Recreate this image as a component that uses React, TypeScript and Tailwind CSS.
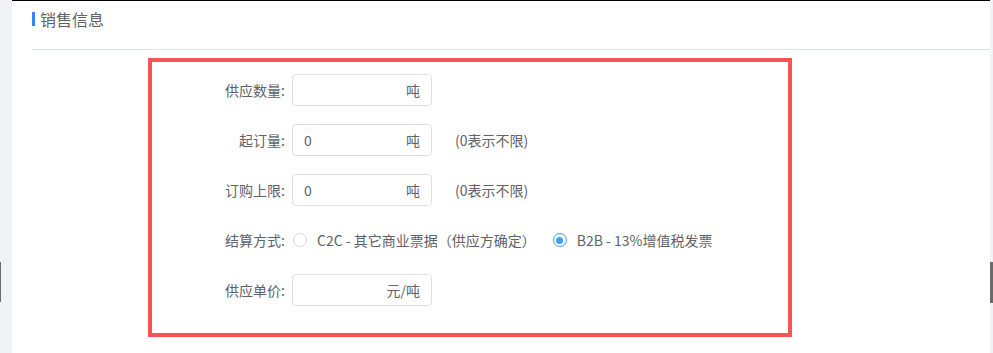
import React from 'react'

const FONT = { fontFamily: '"Noto Sans CJK SC", "Noto Sans", sans-serif' }

const InputWithUnit = ({ value, unit }: { value?: string; unit: string }) => (
  <div className="flex h-8 w-[140px] items-center justify-between rounded-[4px] border border-[#dcdfe6] bg-white px-[11px] text-[14px] text-[#606266]">
    <span>{value ?? ''}</span>
    <span>{unit}</span>
  </div>
)

const Row = ({ label, children }: { label: string; children: React.ReactNode }) => (
  <div className="flex h-8 items-center">
    <div className="w-[140px] shrink-0 pr-[7px] text-right text-[14px] text-[#606266]">{label}:</div>
    {children}
  </div>
)

const Radio = ({ checked, label }: { checked?: boolean; label: string }) => (
  <label className="flex items-center whitespace-nowrap text-[14px] text-[#606266]">
    <span
      className={
        checked
          ? 'flex h-[14px] w-[14px] shrink-0 items-center justify-center rounded-full border border-[#409eff] bg-white'
          : 'h-[14px] w-[14px] shrink-0 rounded-full border border-[#d4d7de] bg-white'
      }
    >
      {checked && <span className="h-[7px] w-[7px] rounded-full bg-[#409eff]" />}
    </span>
    <span className="pl-[10px]">{label}</span>
  </label>
)

export default function App() {
  return (
    <div className="flex h-[353px] w-[993px] overflow-hidden bg-[#f0f2f5]" style={FONT}>
      {/* left gutter */}
      <div className="relative w-3 shrink-0">
        <div className="absolute left-0 top-[262px] h-[40px] w-[1px] bg-[#6b6b6b]" />
      </div>

      <div className="flex-1 border-t border-black bg-white">
        <div className="ml-5 flex h-[49px] items-start border-b border-[#dfe4ea] pt-[10px]">
          <div className="mt-[1px] h-[14px] w-[3px] bg-[#3385ff]" />
          <span className="ml-[5px] text-[16px] leading-[16px] text-[#606266]">销售信息</span>
        </div>

        <div className="ml-[136px] mt-2 h-[279px] w-[644px] border-4 border-[#f55555] pt-3">
          <div className="flex flex-col gap-[18px]">
            <Row label="供应数量">
              <InputWithUnit unit="吨" />
            </Row>
            <Row label="起订量">
              <InputWithUnit value="0" unit="吨" />
              <span className="ml-[23px] text-[14px] text-[#606266]">(0表示不限)</span>
            </Row>
            <Row label="订购上限">
              <InputWithUnit value="0" unit="吨" />
              <span className="ml-[23px] text-[14px] text-[#606266]">(0表示不限)</span>
            </Row>
            <Row label="结算方式">
              <div className="flex items-center gap-[17px] pl-[1px]">
                <Radio label="C2C - 其它商业票据（供应方确定）" />
                <Radio checked label="B2B - 13%增值税发票" />
              </div>
            </Row>
            <Row label="供应单价">
              <InputWithUnit unit="元/吨" />
            </Row>
          </div>
        </div>
      </div>

      {/* right scrollbar */}
      <div className="relative w-[3px] shrink-0">
        <div className="absolute left-0 top-[262px] h-[41px] w-[3px] bg-[#6b6b6b]" />
      </div>
    </div>
  )
}
